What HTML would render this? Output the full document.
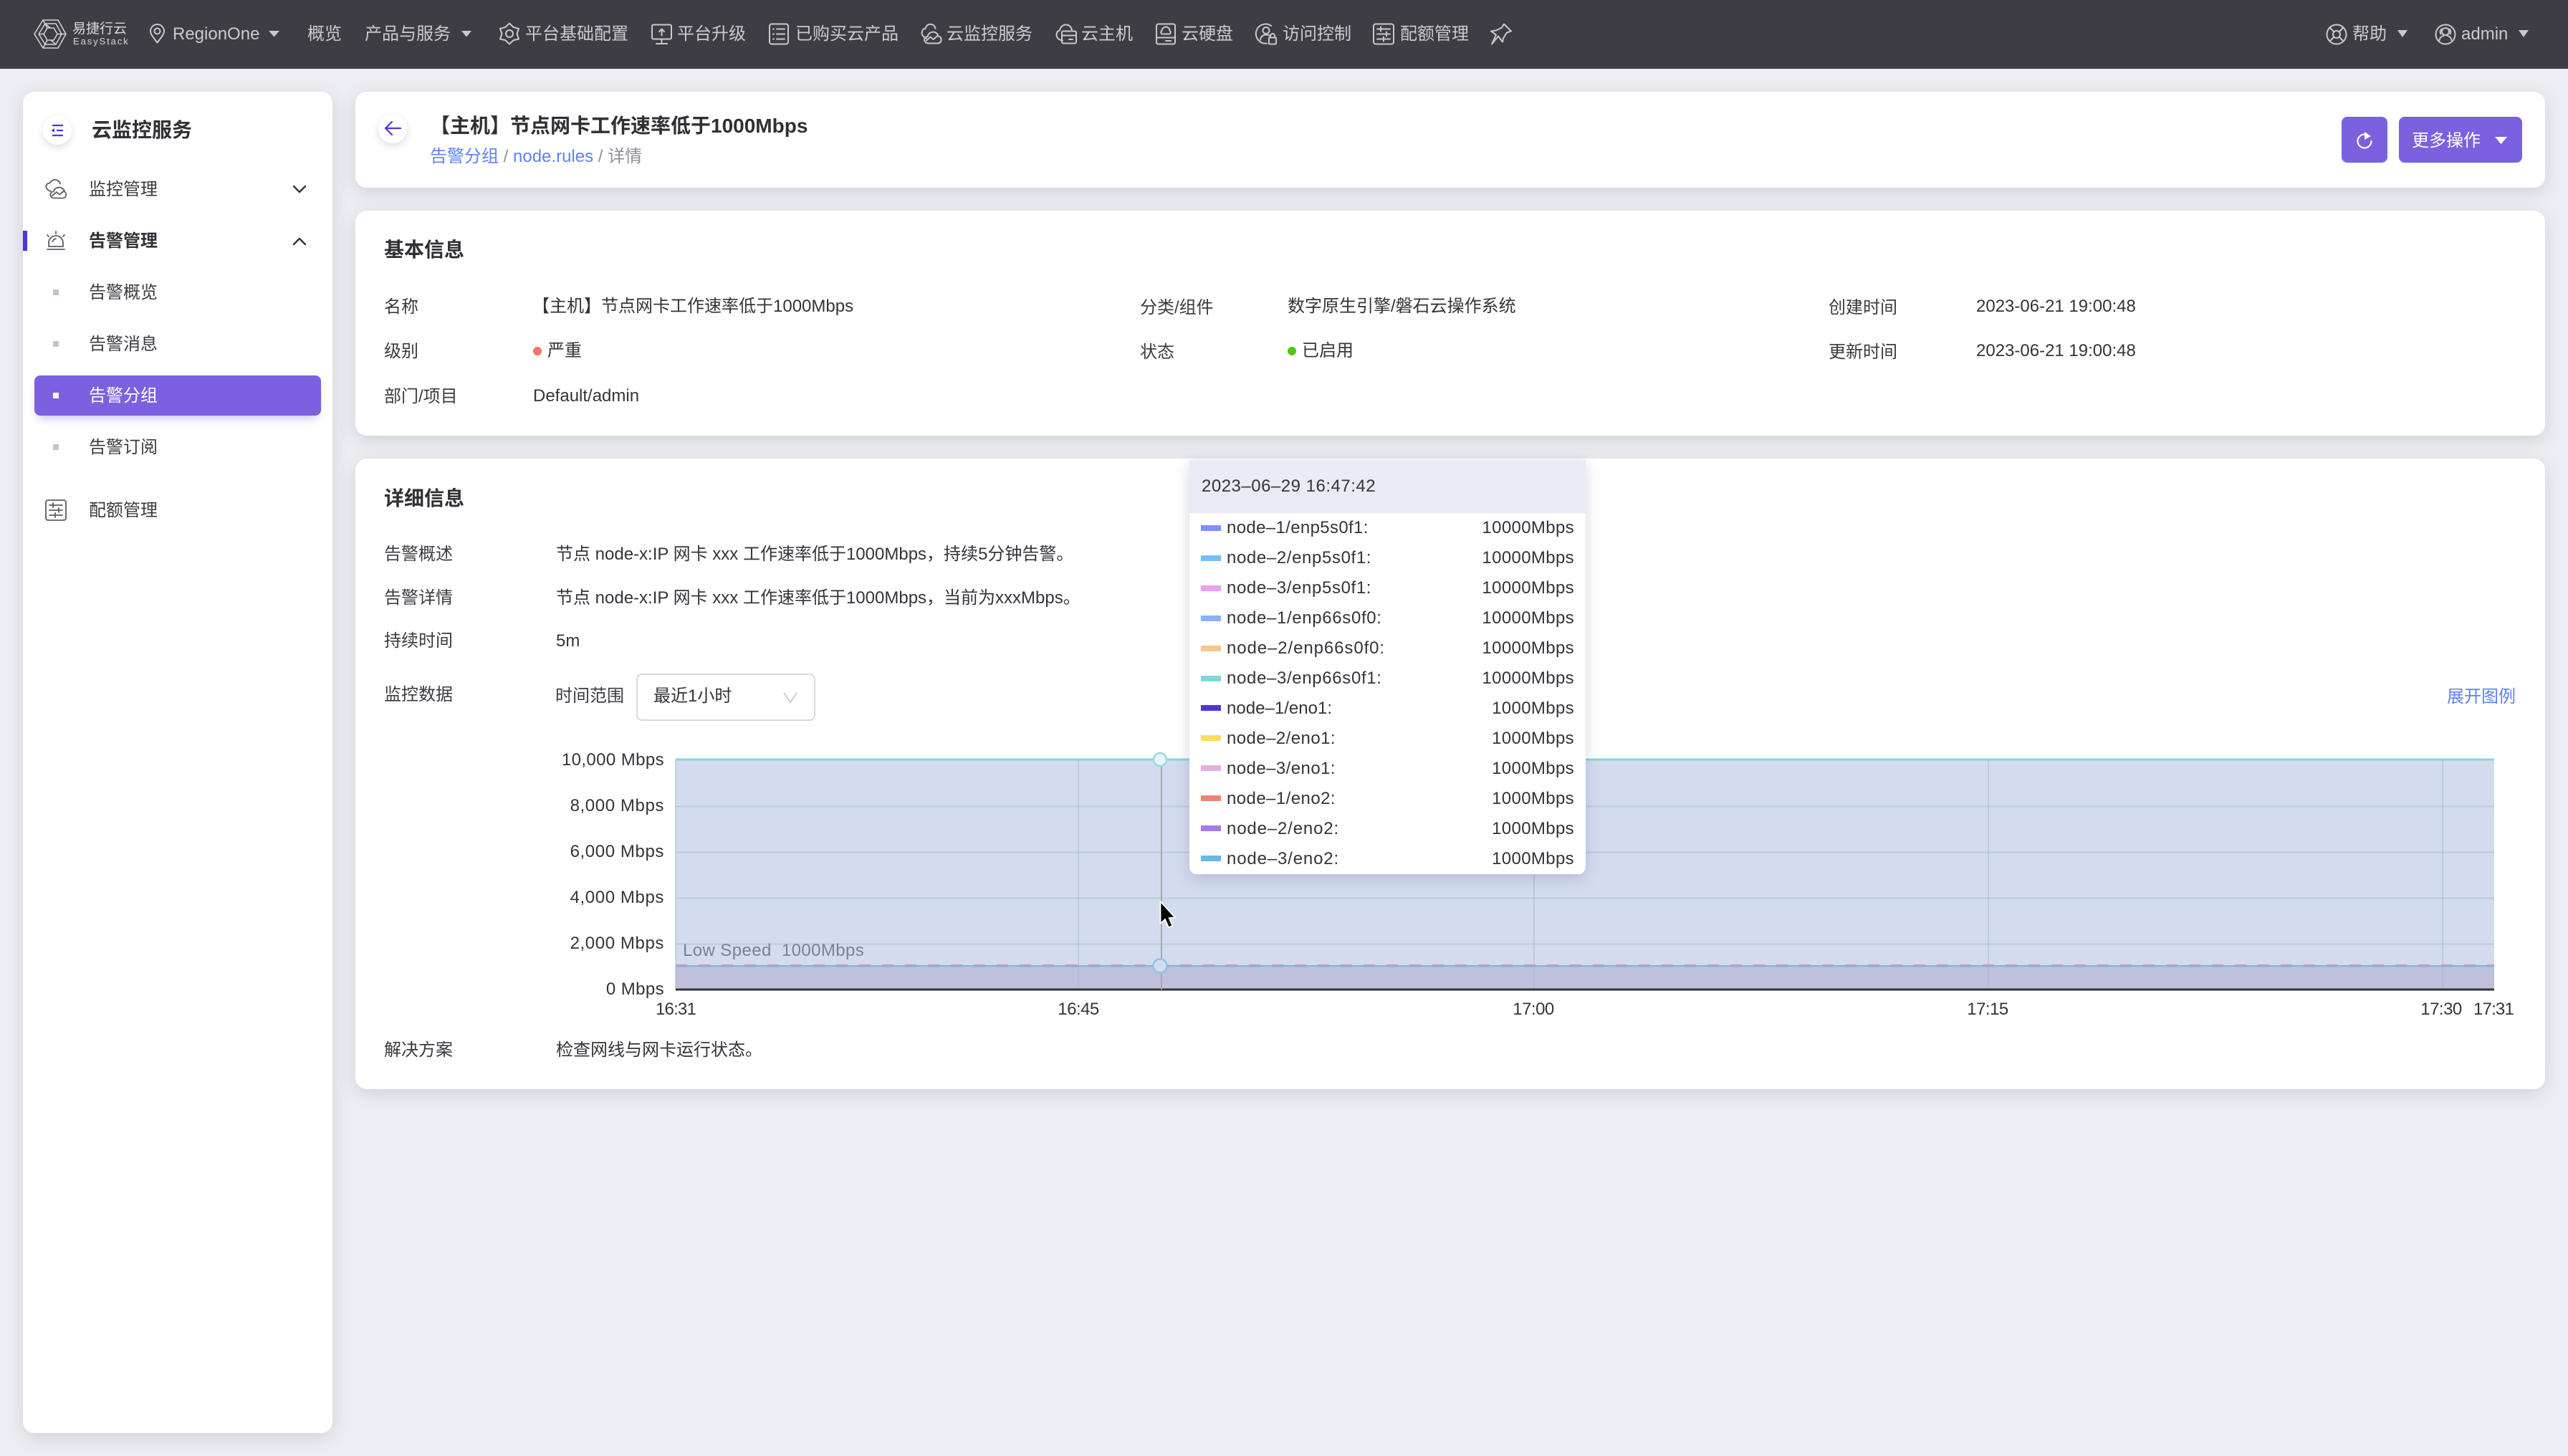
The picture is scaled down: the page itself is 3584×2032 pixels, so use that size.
<!DOCTYPE html>
<html lang="zh-CN">
<head>
<meta charset="utf-8">
<title>云监控服务</title>
<style>
html,body{margin:0;padding:0;width:3584px;height:2032px;overflow:hidden;background:#EDEEF3}
body{position:relative;font-family:"Liberation Sans","Noto Sans CJK SC",sans-serif;font-size:24px;color:#33343c}
.t{position:absolute;line-height:32px;white-space:pre;transform:translateY(-50%);margin-top:2px}
.r{transform:translate(-100%,-50%);margin-top:0}
.c{transform:translate(-50%,-50%);margin-top:0}
.b{font-weight:700}
.h{color:#cbcbcb;margin-top:0}
.tip{margin-top:1px}
.box{position:absolute;background:#fff;border-radius:16px;box-shadow:0 6px 24px rgba(60,70,100,.17)}
.lnk{color:#5f82f2}
.g{color:#3a3b42}
.s{position:absolute;left:74px;width:8px;height:8px;background:#c0c3d0}
.sw{position:absolute;left:1676px;width:28px;height:8px}
svg{position:absolute;left:0;top:0}
</style>
</head>
<body>
<div style="position:absolute;left:0;top:0;width:3584px;height:96px;background:#3E3D43"></div>

<div class="box" style="left:32px;top:128px;width:432px;height:1872px"></div>
<div class="box" style="left:496px;top:128px;width:3056px;height:134px"></div>
<div class="box" style="left:496px;top:294px;width:3056px;height:314px"></div>
<div class="box" style="left:496px;top:640px;width:3056px;height:880px"></div>

<!-- header text -->
<div class="t h" style="left:101px;top:40.500px;font-size:19px;line-height:20px;color:#d8d8d8">易捷行云</div>
<div class="t h" style="left:102px;top:58px;font-size:13px;line-height:14px;letter-spacing:1.900px;color:#d8d8d8">EasyStack</div>
<div class="t h" style="left:241px;top:47.500px">RegionOne</div>
<div class="t h" style="left:429px;top:47.500px">概览</div>
<div class="t h" style="left:509px;top:47.500px">产品与服务</div>
<div class="t h" style="left:733px;top:47.500px">平台基础配置</div>
<div class="t h" style="left:945px;top:47.500px">平台升级</div>
<div class="t h" style="left:1110px;top:47.500px">已购买云产品</div>
<div class="t h" style="left:1321px;top:47.500px">云监控服务</div>
<div class="t h" style="left:1509px;top:47.500px">云主机</div>
<div class="t h" style="left:1649px;top:47.500px">云硬盘</div>
<div class="t h" style="left:1790px;top:47.500px">访问控制</div>
<div class="t h" style="left:1954px;top:47.500px">配额管理</div>
<div class="t h" style="left:3283px;top:47.500px">帮助</div>
<div class="t h" style="left:3435px;top:47.500px">admin</div>

<!-- sidebar -->
<div style="position:absolute;left:32px;top:322px;width:6px;height:28px;background:#5035D6"></div>
<div style="position:absolute;left:60px;top:162px;width:40px;height:40px;border-radius:50%;background:#fff;box-shadow:0 4px 10px rgba(50,50,90,.16)"></div>
<div style="position:absolute;left:48px;top:524px;width:400px;height:56px;border-radius:8px;background:#7B60E0;box-shadow:0 8px 14px -6px rgba(90,60,220,.4)"></div>
<div class="t b" style="left:128px;top:180px;font-size:28px;color:#303136">云监控服务</div>
<div class="t g" style="left:124px;top:262.500px">监控管理</div>
<div class="t b" style="left:124px;top:334.500px;color:#303136">告警管理</div>
<div class="t g" style="left:124px;top:406.500px">告警概览</div>
<div class="t g" style="left:124px;top:478.500px">告警消息</div>
<div class="t" style="left:124px;top:550.500px;color:#fff">告警分组</div>
<div class="t g" style="left:124px;top:622.500px">告警订阅</div>
<div class="t g" style="left:124px;top:710.500px">配额管理</div>
<div class="s" style="top:404px"></div>
<div class="s" style="top:476px"></div>
<div class="s" style="top:548px;background:#fff"></div>
<div class="s" style="top:620px"></div>

<!-- page header -->
<div style="position:absolute;left:528px;top:160px;width:40px;height:40px;border-radius:50%;background:#fff;box-shadow:0 4px 10px rgba(50,50,90,.16)"></div>
<div class="t b" style="left:600px;top:173.500px;font-size:28px;color:#2f3036">【主机】节点网卡工作速率低于1000Mbps</div>
<div class="t" style="left:600px;top:216.500px"><span class="lnk">告警分组</span><span style="color:#8b8f99"> / </span><span class="lnk">node.rules</span><span style="color:#8b8f99"> / 详情</span></div>
<div style="position:absolute;left:3268px;top:163px;width:64px;height:64px;border-radius:8px;background:#7B60E0"></div>
<div style="position:absolute;left:3348px;top:163px;width:172px;height:64px;border-radius:8px;background:#7B60E0"></div>
<div class="t" style="left:3366px;top:194.500px;color:#fff">更多操作</div>

<!-- basic info -->
<div class="t b" style="left:536px;top:346.500px;font-size:28px;color:#2f3036">基本信息</div>
<div class="t g" style="left:536px;top:426.500px">名称</div>
<div class="t" style="left:743px;top:425.500px">【主机】节点网卡工作速率低于1000Mbps</div>
<div class="t g" style="left:536px;top:488.500px">级别</div>
<div style="position:absolute;left:744px;top:484px;width:12px;height:12px;border-radius:50%;background:#F2736A"></div>
<div class="t" style="left:764px;top:487.500px">严重</div>
<div class="t g" style="left:536px;top:551.500px">部门/项目</div>
<div class="t" style="left:744px;top:550.500px">Default/admin</div>
<div class="t g" style="left:1591px;top:427.500px">分类/组件</div>
<div class="t" style="left:1797px;top:425.500px">数字原生引擎/磐石云操作系统</div>
<div class="t g" style="left:1591px;top:489.500px">状态</div>
<div style="position:absolute;left:1797px;top:484px;width:12px;height:12px;border-radius:50%;background:#52C41A"></div>
<div class="t" style="left:1817px;top:487.500px">已启用</div>
<div class="t g" style="left:2552px;top:427.500px">创建时间</div>
<div class="t" style="left:2758px;top:425.500px">2023-06-21 19:00:48</div>
<div class="t g" style="left:2552px;top:489.500px">更新时间</div>
<div class="t" style="left:2758px;top:487.500px">2023-06-21 19:00:48</div>

<!-- detail -->
<div class="t b" style="left:536px;top:693.500px;font-size:28px;color:#2f3036">详细信息</div>
<div class="t g" style="left:536px;top:771.500px">告警概述</div>
<div class="t" style="left:776px;top:771.500px">节点 node-x:IP 网卡 xxx 工作速率低于1000Mbps，持续5分钟告警。</div>
<div class="t g" style="left:536px;top:832.500px">告警详情</div>
<div class="t" style="left:776px;top:832.500px">节点 node-x:IP 网卡 xxx 工作速率低于1000Mbps，当前为xxxMbps。</div>
<div class="t g" style="left:536px;top:892.500px">持续时间</div>
<div class="t" style="left:776px;top:892.500px">5m</div>
<div class="t g" style="left:536px;top:967.500px">监控数据</div>
<div class="t g" style="left:775px;top:969.500px">时间范围</div>
<div style="position:absolute;left:888px;top:940px;width:246px;height:62px;border:2px solid #D9D9DE;border-radius:8px;background:#fff"></div>
<div class="t" style="left:912px;top:969.500px">最近1小时</div>
<div class="t lnk" style="left:3415px;top:970.500px">展开图例</div>
<div class="t g" style="left:536px;top:1463.500px">解决方案</div>
<div class="t" style="left:776px;top:1463.500px">检查网线与网卡运行状态。</div>

<!-- chart labels -->
<div class="t r" style="left:927px;top:1061px;letter-spacing:.4px">10,000 Mbps</div>
<div class="t r" style="left:927px;top:1125px;letter-spacing:.6px">8,000 Mbps</div>
<div class="t r" style="left:927px;top:1189px;letter-spacing:.6px">6,000 Mbps</div>
<div class="t r" style="left:927px;top:1253px;letter-spacing:.6px">4,000 Mbps</div>
<div class="t r" style="left:927px;top:1317px;letter-spacing:.6px">2,000 Mbps</div>
<div class="t r" style="left:927px;top:1381px;letter-spacing:.4px">0 Mbps</div>
<div class="t c" style="left:943px;top:1409px;letter-spacing:-.8px">16:31</div>
<div class="t c" style="left:1505px;top:1409px;letter-spacing:-.5px">16:45</div>
<div class="t c" style="left:2140px;top:1409px;letter-spacing:-.5px">17:00</div>
<div class="t c" style="left:2774px;top:1409px;letter-spacing:-.5px">17:15</div>
<div class="t c" style="left:3407px;top:1409px;letter-spacing:-.5px">17:30</div>
<div class="t c" style="left:3480px;top:1409px;letter-spacing:-.8px">17:31</div>

<!-- chart + icons -->
<svg width="3584" height="2032" viewBox="0 0 3584 2032" fill="none">
  <!-- plot -->
  <rect x="943" y="1060" width="2538" height="321" fill="#D3DCEE"/>
  <rect x="943" y="1349" width="2538" height="32" fill="#BEC0DC"/>
  <g stroke="#BCC8DF" stroke-width="2">
    <path d="M943 1125.500H3481M943 1189.500H3481M943 1253.500H3481M943 1317.500H3481"/>
  </g>
  <g stroke="#A9B4D2" stroke-opacity=".5" stroke-width="2">
    <path d="M943 1060V1381M1505 1060V1381M2141 1060V1381M2775 1060V1381M3409 1060V1381"/>
  </g>
  <path d="M943 1060H3481" stroke="#80D8D8" stroke-width="3"/>
  <path d="M943 1347.700H3481" stroke="#C9A6B2" stroke-width="4" stroke-dasharray="16 16"/>
  <path d="M943 1348H3481" stroke="#7DB3E0" stroke-width="2"/>
  <path d="M943 1381H3481" stroke="#333338" stroke-width="3"/>
  <path d="M1621 1060V1381" stroke="#A8A8AC" stroke-width="2"/>
  <circle cx="1619" cy="1060" r="9" fill="#EDF3F8" stroke="#90DEDE" stroke-width="2.500"/>
  <circle cx="1619" cy="1348" r="9.500" fill="#D3DCEE" stroke="#90C3EA" stroke-width="2.500"/>

  <!-- logo -->
  <g stroke="#d4d4d4" stroke-width="1.500" stroke-linejoin="miter">
    <path d="M60 28H81L92 47.500L81 67H60L48 47.500Z"/>
    <path d="M66 39H75L80 47.500L75 56H66L61 47.500Z"/>
    <path d="M54 47.500L63 33H78L86 47.500L78 62H63L54 47.500"/>
    <path d="M60 28L66 39M92 47.500H80M60 67L66 56M63 33L70 39M78 62L71 56M54 47.500H61"/>
  </g>

  <g transform="translate(0,-2.500)" stroke="#c9c9c9" stroke-width="2" stroke-linejoin="round" stroke-linecap="round">
    <!-- location -->
    <path d="M219.500 62C212.500 53 210 49.500 210 46a9.500 9.500 0 0 1 19 0c0 3.500-2.500 7-9.500 16z"/>
    <circle cx="219.500" cy="46" r="4"/>
    <!-- gear -->
    <path d="M711 35L716.600 40.400L724 42.500L721.500 49.750L724 57L716.600 58.600L711 64L705.400 58.600L698 57L700.500 49.750L698 42.500L705.400 40.400Z"/>
    <circle cx="711" cy="49.500" r="5"/>
    <!-- monitor -->
    <rect x="910" y="37" width="27" height="20" rx="2"/>
    <path d="M923.500 57V63M916 63.500H931M923.500 52V43M920 46.500L923.500 43L927 46.500"/>
    <!-- list -->
    <rect x="1074" y="36" width="26" height="28" rx="3"/>
    <path d="M1079 43H1080M1084 43H1095M1079 50H1080M1084 50H1095M1079 57H1080M1084 57H1095"/>
    <!-- cloud monitor -->
    <path d="M1293 56C1288 54 1285.500 50 1287 46C1288 43.500 1290 42.500 1291.500 42.500C1292.500 38 1296 35.500 1300 36.500C1303 37.200 1305 39.500 1305.500 42.500"/>
    <path d="M1296 63C1291.500 63 1289.500 59.500 1290.500 56.500C1291 54.500 1293 53.500 1294.500 53.500C1295.500 49 1300 46 1304.500 47.500C1307.500 48.500 1309 50.500 1309.500 53C1312.500 53.500 1314 56 1313.500 59C1313 61.500 1311 63 1308 63Z"/>
    <path d="M1293 59L1298.500 54L1302.500 57.500L1309 52"/>
    <!-- host -->
    <path d="M1483 59C1478 58.500 1474.500 55 1474.500 51C1474.500 47.500 1476.500 45.500 1479 44.800C1480 40 1483.500 37 1487.500 37C1492 37 1495 40 1496 44"/>
    <rect x="1482" y="46" width="20" height="17" rx="2"/>
    <path d="M1482 52H1502M1492 57.500H1497"/>
    <!-- disk -->
    <rect x="1614" y="36" width="26" height="28" rx="2.500"/>
    <path d="M1614 55H1640M1622 50C1620 49.500 1619.500 46.500 1621.500 45.500C1621.500 42 1625 40 1627 40C1630 40 1632.500 42 1632.500 45.500C1634.500 46.500 1634 49.500 1632 50ZM1627 59.500H1634"/>
    <!-- access -->
    <path d="M1774 38.500A13.500 13.500 0 1 0 1768 63"/>
    <circle cx="1767" cy="45" r="4.500"/>
    <path d="M1759 58C1759.500 53.500 1763 51 1767 51C1769 51 1771 51.600 1772 52.500"/>
    <rect x="1771" y="55" width="10" height="9" rx="1"/>
    <path d="M1773 55V52.500A3 3 0 0 1 1779 52.500V55"/>
    <!-- quota -->
    <rect x="1917" y="36" width="28" height="28" rx="3"/>
    <path d="M1922 43H1940M1922 50H1940M1922 57H1940M1927 40V46M1935 47V53M1931 54V60"/>
    <!-- pin -->
    <path d="M2099 36L2109 46L2103 48L2098 56L2097 61L2091 53L2082 64L2088 51L2081 46L2088 45L2096 41Z"/>
  </g>
  <g stroke="#c9c9c9" stroke-width="2" stroke-linejoin="round" stroke-linecap="round">
    <!-- help -->
    <circle cx="3261" cy="48" r="13.500"/>
    <circle cx="3261" cy="48" r="5"/>
    <path d="M3251.500 38.500L3257.500 44.500M3270.500 38.500L3264.500 44.500M3251.500 57.500L3257.500 51.500M3270.500 57.500L3264.500 51.500"/>
    <!-- admin -->
    <circle cx="3413" cy="48" r="13.500"/>
    <circle cx="3413" cy="44" r="5"/>
    <path d="M3404.500 56C3405 52.500 3408 50.500 3410.500 49.800M3421.500 56C3421 52.500 3418 50.500 3415.500 49.800"/>
    <path d="M3406.500 47.500C3405 45 3405.500 42 3408 40.500M3419.500 47.500C3421 45 3420.500 42 3418 40.500"/>
  </g>

  <!-- carets -->
  <g fill="#c9c9c9">
    <path d="M375 43H390L382.500 51.500Z"/>
    <path d="M644 43H658L651 51.500Z"/>
    <path d="M3346 42H3360L3353 52Z"/>
    <path d="M3515 42H3529L3522 52Z"/>
  </g>
  <path d="M3482 191H3499L3490.500 201Z" fill="#fff"/>

  <!-- refresh -->
  <path d="M3299 187.500A9.500 9.500 0 1 0 3309.500 197" stroke="#fff" stroke-width="2.200" stroke-linecap="round"/>
  <path d="M3300 184L3309 190L3300 195Z" fill="#fff"/>

  <!-- select caret -->
  <path d="M1094 967L1103 980L1112 967" stroke="#BFC0C6" stroke-width="1.500"/>

  <!-- sidebar icons -->
  <g stroke="#5035D6" stroke-width="2.200">
    <path d="M73 175H88M79 182H88M73 189H88"/>
  </g>
  <path d="M76 179V185L71.500 182Z" fill="#5035D6"/>
  <path d="M559 179H538.500M547 170L538 179L547 188" stroke="#5035D6" stroke-width="2.200" stroke-linecap="round" stroke-linejoin="round"/>
  <g stroke="#5c5d66" stroke-width="1.800" stroke-linejoin="round" stroke-linecap="round">
    <path d="M71 267C66 265.500 63.500 262 64.500 259C65.500 256.500 67.500 255.500 69.500 255.500C71.500 251.500 76 250 79.500 251.500C82 252.500 83.500 254 84 256.500"/>
    <path d="M76 276.500C71.500 276.500 69.500 273 70.500 270.500C71 268.500 73 267.500 74.500 267.500C76 263 80.500 260.500 85 262C88 263 89.500 265 90 267.500C92 268.500 92.500 271 92 273C91.500 275.500 89.500 276.500 87 276.500Z"/>
    <path d="M73 273L79 268L83 271.500L90 266"/>
    <path d="M66 348H90"/>
    <path d="M68 344V339A10 10 0 0 1 88 339V344Z"/>
    <path d="M78 323V326M66 328L68 330M90 328L88 330M78 333C75.500 333.500 74 335 73.500 337"/>
    <rect x="64" y="698" width="28" height="28" rx="3"/>
    <path d="M69 705H87M69 712H87M69 719H87M74 702V708M82 709V715M77 716V722"/>
  </g>
  <g stroke="#33343c" stroke-width="2.400" stroke-linecap="round" stroke-linejoin="round">
    <path d="M410 260L418 268L426 260"/>
    <path d="M410 341L418 333L426 341"/>
  </g>
</svg>

<!-- tooltip -->
<div style="position:absolute;left:1660px;top:642px;width:553px;height:578px;background:#fff;border-radius:0 0 10px 10px;box-shadow:0 6px 22px rgba(50,60,100,.2)">
  <div style="height:74px;background:#E9ECF5"></div>
</div>
<div class="t tip" style="left:1677px;top:678px;letter-spacing:.5px">2023–06–29 16:47:42</div>
<div class="sw" style="top:733px;background:#7F8FFB"></div><div class="t tip" style="left:1712px;top:736px;letter-spacing:.35px">node–1/enp5s0f1:</div><div class="t r tip" style="left:2197px;top:736px;letter-spacing:.35px">10000Mbps</div>
<div class="sw" style="top:775px;background:#73BFFB"></div><div class="t tip" style="left:1712px;top:778px;letter-spacing:.62px">node–2/enp5s0f1:</div><div class="t r tip" style="left:2197px;top:778px;letter-spacing:.35px">10000Mbps</div>
<div class="sw" style="top:817px;background:#EF9CF4"></div><div class="t tip" style="left:1712px;top:820px;letter-spacing:.62px">node–3/enp5s0f1:</div><div class="t r tip" style="left:2197px;top:820px;letter-spacing:.35px">10000Mbps</div>
<div class="sw" style="top:859px;background:#8CB0FB"></div><div class="t tip" style="left:1712px;top:862px;letter-spacing:.65px">node–1/enp66s0f0:</div><div class="t r tip" style="left:2197px;top:862px;letter-spacing:.35px">10000Mbps</div>
<div class="sw" style="top:901px;background:#F5C88A"></div><div class="t tip" style="left:1712px;top:904px;letter-spacing:.91px">node–2/enp66s0f0:</div><div class="t r tip" style="left:2197px;top:904px;letter-spacing:.35px">10000Mbps</div>
<div class="sw" style="top:943px;background:#80D8D8"></div><div class="t tip" style="left:1712px;top:946px;letter-spacing:.65px">node–3/enp66s0f1:</div><div class="t r tip" style="left:2197px;top:946px;letter-spacing:.35px">10000Mbps</div>
<div class="sw" style="top:984px;background:#5035D6"></div><div class="t tip" style="left:1712px;top:988px;letter-spacing:.02px">node–1/eno1:</div><div class="t r tip" style="left:2197px;top:988px;letter-spacing:.35px">1000Mbps</div>
<div class="sw" style="top:1026px;background:#FBDD60"></div><div class="t tip" style="left:1712px;top:1030px;letter-spacing:.43px">node–2/eno1:</div><div class="t r tip" style="left:2197px;top:1030px;letter-spacing:.35px">1000Mbps</div>
<div class="sw" style="top:1068px;background:#E2B0E2"></div><div class="t tip" style="left:1712px;top:1072px;letter-spacing:.43px">node–3/eno1:</div><div class="t r tip" style="left:2197px;top:1072px;letter-spacing:.35px">1000Mbps</div>
<div class="sw" style="top:1110px;background:#E98570"></div><div class="t tip" style="left:1712px;top:1114px;letter-spacing:.43px">node–1/eno2:</div><div class="t r tip" style="left:2197px;top:1114px;letter-spacing:.35px">1000Mbps</div>
<div class="sw" style="top:1152px;background:#A67AE8"></div><div class="t tip" style="left:1712px;top:1156px;letter-spacing:.85px">node–2/eno2:</div><div class="t r tip" style="left:2197px;top:1156px;letter-spacing:.35px">1000Mbps</div>
<div class="sw" style="top:1194px;background:#66BBE2"></div><div class="t tip" style="left:1712px;top:1198px;letter-spacing:.85px">node–3/eno2:</div><div class="t r tip" style="left:2197px;top:1198px;letter-spacing:.35px">1000Mbps</div>

<!-- low speed + cursor -->
<div class="t" style="left:953px;top:1325px;color:#7c8192;letter-spacing:.4px">Low Speed  1000Mbps</div>
<svg width="3584" height="2032" viewBox="0 0 3584 2032" fill="none">
  <path d="M1619.500 1258V1289L1626 1283L1631 1294.500L1636.500 1292L1631.500 1281L1640 1280.500Z" fill="#000" stroke="#fff" stroke-width="1.800" stroke-linejoin="round"/>
</svg>
</body>
</html>
